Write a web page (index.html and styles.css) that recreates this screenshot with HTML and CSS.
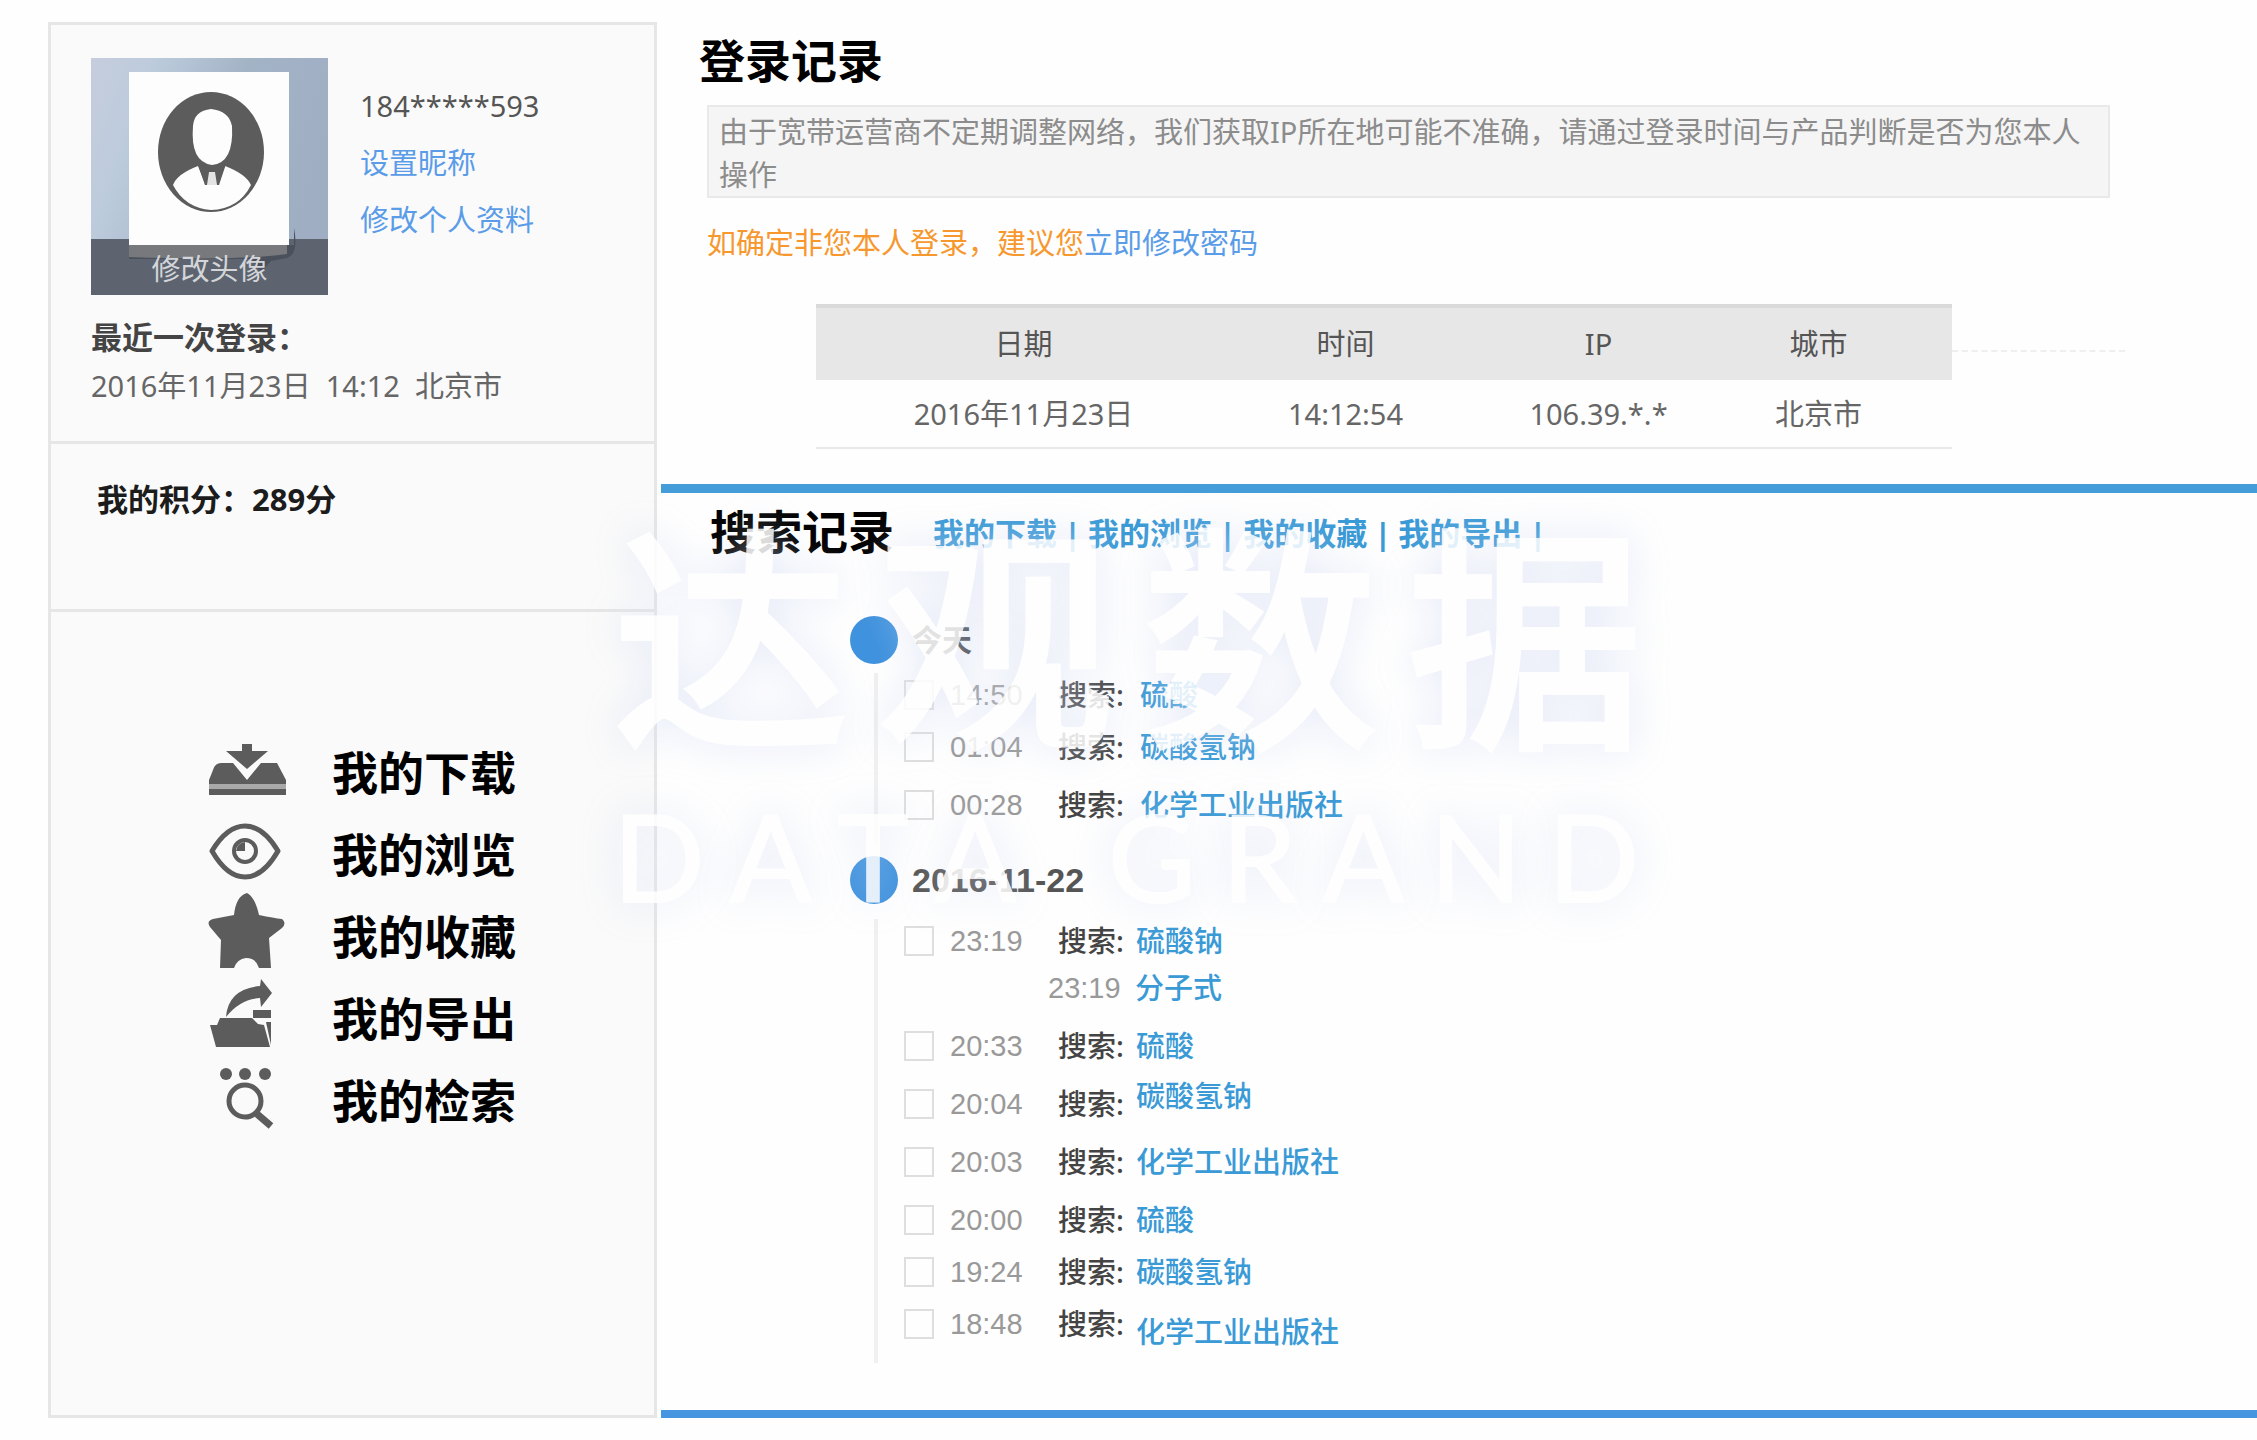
FILE: index.html
```html
<!DOCTYPE html>
<html lang="zh-CN">
<head>
<meta charset="utf-8">
<title>登录记录</title>
<link rel="stylesheet" href="styles.css">
</head>
<body>
<div class="page">
  <aside class="sidebar">
    <section class="profile">
      <div class="profile-top">
        <button class="avatar" type="button">
          <svg class="avatar-art" viewBox="0 0 237 237" aria-hidden="true">
            <defs>
              <linearGradient id="sky" x1="0" y1="0" x2="1" y2="0.35">
                <stop offset="0" stop-color="#c6cddd"/>
                <stop offset="0.25" stop-color="#bccbdc"/>
                <stop offset="0.6" stop-color="#a3b3c6"/>
                <stop offset="1" stop-color="#a0aec3"/>
              </linearGradient>
            </defs>
            <rect width="237" height="237" fill="url(#sky)"/>
            <rect y="181" width="237" height="56" fill="#5d646f"/>
            <path d="M38 187H203V170Q208 196 196 200L180 203L170 214L160 201H38Z" fill="#4a505c"/>
            <path d="M38 187H196V196Q150 203 38 199Z" fill="#77797d"/>
            <rect x="38" y="14" width="160" height="173" fill="#fdfdfd"/>
            <ellipse cx="120" cy="94" rx="53" ry="60" fill="#5c5c5c"/>
            <path d="M102 68Q103 53 120 51Q138 53 141 68Q143 105 121 107Q99 104 102 68Z" fill="#fdfdfd"/>
            <path d="M82 127Q86 116 107 108L114 126H127L134 108Q155 116 160 127Q148 151 120 152Q94 150 82 127Z" fill="#fdfdfd"/>
            <path d="M107 106L120 112L135 106L128 127H114Z" fill="#5c5c5c"/>
            <path d="M118 114H124L126 127H116Z" fill="#e4e4e4"/>
          </svg>
          <span class="avatar-caption">修改头像</span>
        </button>
        <div class="profile-links">
          <span class="account">184*****593</span>
          <a href="#nickname">设置昵称</a>
          <a href="#profile">修改个人资料</a>
        </div>
      </div>
      <p class="last-title">最近一次登录：</p>
      <p class="last-text">2016年11月23日&nbsp; 14:12&nbsp; 北京市</p>
    </section>
    <section class="points">我的积分：289分</section>
    <nav class="menu">
      <a class="menu-item" href="#download">
        <svg viewBox="0 0 84 82" aria-hidden="true">
          <path d="M38 13H48V20H64L43 38L22 20H38Z"/>
          <path d="M5 53V49L9 39Q11 32 17 32H29L43 49L57 32H73L82 49V53Z"/>
          <path d="M5 53H82V58H5Z" fill="#a9a9a9"/>
          <path d="M5 58H82V64H5Z"/>
        </svg>
        我的下载
      </a>
      <a class="menu-item" href="#browse">
        <svg viewBox="0 0 84 82" aria-hidden="true">
          <path d="M8 38Q23 13 41 13Q59 13 74 38Q59 64 41 64Q23 64 8 38Z" fill="none" stroke="#5c5c5c" stroke-width="5" stroke-linejoin="round"/>
          <circle cx="41" cy="38" r="11" fill="none" stroke="#5c5c5c" stroke-width="4"/>
          <path d="M41 29V38H32Q33 30 41 29Z"/>
        </svg>
        我的浏览
      </a>
      <a class="menu-item" href="#favorite">
        <svg viewBox="0 0 84 82" aria-hidden="true">
          <path d="M43 -2Q51 2 55 20Q70 23 78 24Q83 28 78 33L65 43L67 73H55Q52 63 42 63Q33 64 30 73H16L17 45L6 32Q2 26 9 24L30 20Q32 1 43 -2Z"/>
        </svg>
        我的收藏
      </a>
      <a class="menu-item" href="#export">
        <svg viewBox="0 0 84 82" aria-hidden="true">
          <path d="M22 40Q24 12 56 9L57 2L68 16L57 30L56 21Q36 22 22 40Z"/>
          <path d="M49 33H67V41H49Z"/>
          <path d="M6 48H13L16 41H48L54 47L60 48L66 70H12Z"/>
          <path d="M62 45H67V68Z"/>
        </svg>
        我的导出
      </a>
      <a class="menu-item" href="#search">
        <svg viewBox="0 0 84 82" aria-hidden="true">
          <circle cx="22" cy="15" r="6"/>
          <circle cx="41" cy="15" r="6"/>
          <circle cx="61" cy="15" r="6"/>
          <circle cx="41" cy="42" r="16" fill="none" stroke="#5c5c5c" stroke-width="5"/>
          <path d="M53 55L67 67" fill="none" stroke="#5c5c5c" stroke-width="7"/>
        </svg>
        我的检索
      </a>
    </nav>
  </aside>

  <main class="content">
    <section class="login">
      <h1>登录记录</h1>
      <p class="notice">由于宽带运营商不定期调整网络，我们获取IP所在地可能不准确，请通过登录时间与产品判断是否为您本人操作</p>
      <p class="warning">如确定非您本人登录，建议您<a href="#password">立即修改密码</a></p>
      <div class="table-area">
        <table class="login-table">
          <thead>
            <tr><th class="col-date">日期</th><th class="col-time">时间</th><th class="col-ip">IP</th><th class="col-city">城市</th></tr>
          </thead>
          <tbody>
            <tr><td>2016年11月23日</td><td>14:12:54</td><td>106.39.*.*</td><td class="col-city">北京市</td></tr>
          </tbody>
        </table>
        <div class="trail"></div>
      </div>
    </section>

    <section class="search">
      <header class="search-head">
        <h2>搜索记录</h2>
        <nav class="tabs">
          <a href="#download">我的下载</a><span>|</span>
          <a href="#browse">我的浏览</a><span>|</span>
          <a href="#favorite">我的收藏</a><span>|</span>
          <a href="#export">我的导出</a><span>|</span>
        </nav>
      </header>
      <div class="day">
        <h3>今天</h3>
        <ul class="records wide">
          <li class="tight"><input type="checkbox" id="r1"><time>14:50</time><label for="r1">搜索:</label><a href="#q">硫酸</a></li>
          <li><input type="checkbox" id="r2"><time>01:04</time><label for="r2">搜索:</label><a href="#q">碳酸氢钠</a></li>
          <li><input type="checkbox" id="r3"><time>00:28</time><label for="r3">搜索:</label><a href="#q">化学工业出版社</a></li>
        </ul>
      </div>
      <div class="day">
        <h3 class="date">2016-11-22</h3>
        <ul class="records">
          <li class="joined"><input type="checkbox" id="r4"><time>23:19</time><label for="r4">搜索:</label><a href="#q">硫酸钠</a></li>
          <li class="sub"><time>23:19</time><a href="#q">分子式</a></li>
          <li><input type="checkbox" id="r5"><time>20:33</time><label for="r5">搜索:</label><a href="#q">硫酸</a></li>
          <li><input type="checkbox" id="r6"><time>20:04</time><label for="r6">搜索:</label><a class="raised" href="#q">碳酸氢钠</a></li>
          <li><input type="checkbox" id="r7"><time>20:03</time><label for="r7">搜索:</label><a href="#q">化学工业出版社</a></li>
          <li class="tight"><input type="checkbox" id="r8"><time>20:00</time><label for="r8">搜索:</label><a href="#q">硫酸</a></li>
          <li class="tight"><input type="checkbox" id="r9"><time>19:24</time><label for="r9">搜索:</label><a href="#q">碳酸氢钠</a></li>
          <li><input type="checkbox" id="r10"><time>18:48</time><label for="r10">搜索:</label><a class="lowered" href="#q">化学工业出版社</a></li>
        </ul>
      </div>
    </section>

    <div class="watermark">
      <div class="mark-cn"><span>达</span><span>观</span><span>数</span><span>据</span></div>
      <div class="mark-en">
        <div class="word"><span>D</span><span>A</span><span>T</span><span>A</span></div>
        <div class="word"><span>G</span><span>R</span><span>A</span><span>N</span><span>D</span></div>
      </div>
    </div>
  </main>
</div>
</body>
</html>
```
FILE: styles.css
```css
* {
  box-sizing: border-box;
}

body {
  margin: 0;
  background: #fefefe;
  color: #555;
  font-family: "Noto Sans", "Noto Sans CJK SC", sans-serif;
  font-size: 29px;
  line-height: 44px;
}

h1,
h2,
h3,
p,
ul {
  margin: 0;
  padding: 0;
}

a {
  color: #3a9ad6;
  text-decoration: none;
}

.page {
  display: grid;
  grid-template-columns: 609px 1fr;
  gap: 4px;
  padding: 22px 0 21px 48px;
}

/* Sidebar */

.sidebar {
  border: 3px solid #e6e6e6;
  background: #fafafa;
}

.profile {
  height: 419px;
  padding: 33px 40px 0;
  border-bottom: 3px solid #e6e6e6;
}

.profile-top {
  display: flex;
  gap: 32px;
}

.avatar {
  position: relative;
  width: 237px;
  height: 237px;
  padding: 0;
  border: 0;
  background: none;
  font: inherit;
}

.avatar-art {
  display: block;
}

.avatar-caption {
  position: absolute;
  inset: auto 0 4px;
  color: #d3d5d9;
}

.profile-links {
  display: flex;
  flex-direction: column;
  gap: 13px;
  padding-top: 26px;
}

.profile-links a,
.warning a {
  color: #5a9ce8;
}

.last-title {
  margin-top: 20px;
  font-size: 31px;
  font-weight: bold;
  color: #444;
}

.last-text {
  margin-top: 5px;
  color: #666;
}

.points {
  height: 168px;
  padding: 33px 46px 0;
  border-bottom: 3px solid #e6e6e6;
  font-family: "Noto Sans", "Noto Sans CJK TC", sans-serif;
  font-size: 31px;
  font-weight: bold;
  color: #1c1c1c;
}

.menu {
  padding: 119px 0 0 153px;
}

.menu-item {
  display: flex;
  align-items: center;
  gap: 44px;
  height: 82px;
  color: #000;
  font-size: 46px;
  font-weight: bold;
}

.menu-item svg {
  width: 84px;
  height: 82px;
  overflow: visible;
  fill: #5c5c5c;
}

/* Login history */

.content {
  position: relative;
}

.login {
  padding: 6px 147px 35px 46px;
}

h1,
h2 {
  color: #000;
  font-size: 46px;
  font-weight: bold;
  line-height: 64px;
}

h1 {
  margin-left: -8px;
}

.notice {
  margin-top: 13px;
  padding: 3px 10px 0;
  border: 2px solid #e9e9e9;
  background: #f5f5f5;
  color: #8c8c8c;
  line-height: 43px;
}

.warning {
  margin-top: 23px;
  color: #f7982f;
}

.table-area {
  display: flex;
  margin: 39px -15px 0 109px;
}

.login-table {
  width: 1136px;
  border-collapse: separate;
  border-spacing: 0;
  table-layout: fixed;
  text-align: center;
}

.login-table th,
.login-table td {
  padding: 0;
}

.login-table th {
  height: 76px;
  border-top: 4px solid #dadada;
  background: #e7e7e7;
  color: #555;
  font-weight: normal;
}

.login-table td {
  height: 69px;
  border-bottom: 2px solid #e8e8e8;
  color: #666;
}

.col-date {
  width: 415px;
}

.col-time {
  width: 229px;
}

.col-ip {
  width: 277px;
}

.login-table .col-city {
  padding-right: 52px;
}

.trail {
  flex: 1;
  margin-top: 46px;
  border-top: 2px dashed #efefef;
}

/* Search history */

.search {
  padding: 6px 0 47px 49px;
  border-top: 9px solid #449cd8;
  border-bottom: 8px solid #4695e0;
}

.search-head {
  display: flex;
  gap: 39px;
}

.tabs {
  display: flex;
  align-items: center;
  gap: 7px;
  padding-top: 4px;
  color: #3a9ad6;
  font-size: 31px;
  font-weight: bold;
}

.day {
  margin: 12px 0 0 140px;
}

.search-head + .day {
  margin-top: 53px;
}

h3 {
  display: flex;
  align-items: center;
  gap: 14px;
  color: #333;
  font-size: 30px;
}

h3::before {
  content: "";
  width: 48px;
  height: 48px;
  border-radius: 50%;
  background: #3f92de;
}

h3.date {
  color: #555;
  font-family: "Liberation Sans", sans-serif;
  font-size: 34px;
}

.records {
  margin: 15px 0 0 24px;
  padding: 0 0 17px 26px;
  border-left: 4px solid #f0f0f0;
  list-style: none;
}

.records.wide {
  margin-top: 9px;
}

.records li {
  display: grid;
  grid-template-columns: 46px 108px 78px auto;
  align-items: center;
  justify-content: start;
  height: 44px;
  margin-bottom: 14px;
}

.records.wide li {
  grid-template-columns: 46px 108px 82px auto;
}

.records li.tight {
  margin-bottom: 8px;
}

.records li.joined {
  margin-bottom: 3px;
}

.records li:last-child {
  margin-bottom: 0;
}

.records li.sub {
  grid-template-columns: 87px auto;
  padding-left: 144px;
}

.records input {
  appearance: none;
  width: 30px;
  height: 30px;
  margin: 0;
  border: 2px solid #dedede;
  background: #fefefe;
}

.records time {
  color: #999;
  font-family: "Liberation Sans", sans-serif;
}

.records label {
  color: #444;
  font-weight: 500;
}

.records a {
  font-weight: 500;
  line-height: 28px;
}

.records .raised {
  align-self: start;
}

.records .lowered {
  align-self: end;
}

/* Brand watermark laid over the records */

.watermark {
  position: absolute;
  top: 492px;
  left: -48px;
  width: 1030px;
  color: #fff;
  opacity: 0.86;
  pointer-events: none;
  text-shadow: 0 0 40px rgba(216, 224, 246, 0.8);
}

.mark-cn {
  display: flex;
  justify-content: space-between;
  font-size: 236px;
  font-weight: 500;
  line-height: 250px;
  -webkit-text-stroke: 4px #fff;
}

.mark-en {
  display: flex;
  justify-content: space-between;
  padding: 32px 4px 0 0;
  font-family: Lato, sans-serif;
  font-size: 120px;
  line-height: 120px;
  -webkit-text-stroke: 2px #fff;
}

.word {
  display: flex;
  gap: 26px;
}
```
